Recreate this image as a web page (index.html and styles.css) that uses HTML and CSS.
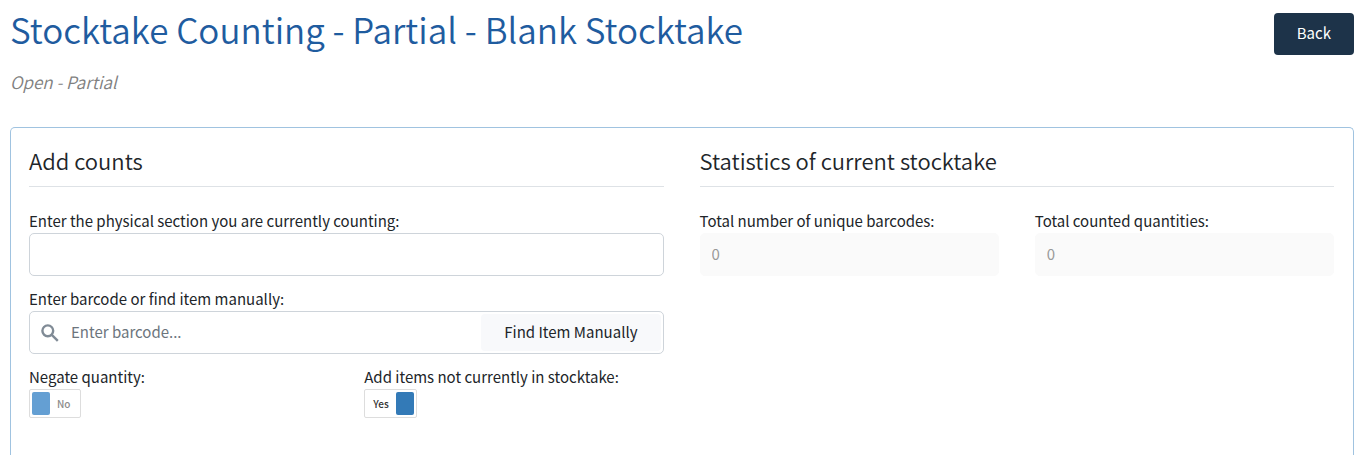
FILE: index.html
```html
<!DOCTYPE html>
<html lang="en">
<head>
    <meta charset="UTF-8">
    <meta name="viewport" content="width=device-width, initial-scale=1.0">
    <title>Stocktake Counting</title>
    <link rel="stylesheet" href="styles.css">
</head>
<body>
    <header class="page-header">
        <div>
            <h1>Stocktake Counting - Partial - Blank Stocktake</h1>
            <p class="status">Open - Partial</p>
        </div>
        <button type="button" class="btn-back">Back</button>
    </header>

    <main class="card">
        <section>
            <h2>Add counts</h2>

            <div class="field">
                <label for="section">Enter the physical section you are currently counting:</label>
                <input type="text" id="section" class="text-input">
            </div>

            <div class="field">
                <label for="barcode">Enter barcode or find item manually:</label>
                <div class="search-box">
                    <svg class="search-icon" viewBox="0 0 18 18" aria-hidden="true">
                        <circle cx="6.8" cy="6.8" r="5.4"/>
                        <path d="M10.8 10.8L16.8 16.8"/>
                    </svg>
                    <input type="text" id="barcode" placeholder="Enter barcode...">
                    <button type="button" class="btn-find">Find Item Manually</button>
                </div>
            </div>

            <div class="columns">
                <div class="field">
                    <label for="negate">Negate quantity:</label>
                    <div class="toggle">
                        <input type="checkbox" id="negate">
                        <span>No</span>
                    </div>
                </div>
                <div class="field">
                    <label for="addItems">Add items not currently in stocktake:</label>
                    <div class="toggle toggle-on">
                        <input type="checkbox" id="addItems" checked>
                        <span>Yes</span>
                    </div>
                </div>
            </div>
        </section>

        <section>
            <h2>Statistics of current stocktake</h2>

            <div class="columns">
                <div class="field">
                    <label for="uniqueBarcodes">Total number of unique barcodes:</label>
                    <input type="text" id="uniqueBarcodes" class="text-input" value="0" disabled>
                </div>
                <div class="field">
                    <label for="totalCounted">Total counted quantities:</label>
                    <input type="text" id="totalCounted" class="text-input" value="0" disabled>
                </div>
            </div>
        </section>
    </main>

    <script>
        // Keep the Yes/No text in step with the toggle
        document.querySelectorAll('.toggle input').forEach(input => {
            input.addEventListener('change', () => {
                input.parentElement.classList.toggle('toggle-on', input.checked);
                input.nextElementSibling.textContent = input.checked ? 'Yes' : 'No';
            });
        });
    </script>
</body>
</html>
```

FILE: styles.css
```css
* {
    box-sizing: border-box;
}

body {
    display: flex;
    flex-direction: column;
    min-height: 100vh;
    margin: 0;
    padding: 10px 12px 0 10px;
    background-color: #fff;
    color: #212529;
    font-family: "Noto Sans CJK SC", "Noto Sans", sans-serif;
    font-size: 15px;
    line-height: 24px;
}

input,
button {
    font: inherit;
    color: inherit;
}

h1,
h2,
p {
    margin: 0;
    font-weight: 350;
}

h1 {
    color: #1f5c9f;
    font-size: 35px;
    line-height: 38px;
}

h2 {
    margin-bottom: 22px;
    padding-bottom: 11px;
    border-bottom: 1px solid #dee2e6;
    font-size: 22px;
    line-height: 30px;
}

.page-header {
    display: flex;
    justify-content: space-between;
    align-items: flex-start;
    min-height: 117px;
}

.status {
    margin-top: 22px;
    color: #808080;
    font-size: 17px;
    font-style: italic;
}

.btn-back {
    margin-top: 3px;
    padding: 8px 23px 10px;
    border: 0;
    border-radius: 4px;
    background-color: #1d3349;
    color: #fff;
}

.card {
    flex: 1;
    display: grid;
    grid-template-columns: 1fr 1fr;
    gap: 36px;
    padding: 17px 19px 17px 18px;
    border: 1px solid #a0c3e0;
    border-bottom: 0;
    border-radius: 5px 5px 0 0;
}

.columns {
    display: grid;
    grid-template-columns: 1fr 1fr;
    gap: 36px;
}

.field {
    margin-bottom: 11px;
}

.field label {
    display: block;
}

.text-input,
.search-box {
    width: 100%;
    height: 43px;
    border: 1px solid #ced4da;
    border-radius: 5px;
    background-color: #fff;
}

.text-input {
    display: block;
    padding: 0 11px 2px;
}

.text-input:disabled {
    border-color: #fafafa;
    background-color: #fafafa;
    color: #999;
}

.search-box {
    display: flex;
    align-items: center;
    padding: 2px;
}

.search-icon {
    flex: none;
    width: 18px;
    height: 18px;
    margin: 0 12px 0 9px;
    fill: none;
    stroke: #808b96;
    stroke-width: 2.4;
}

.search-box input {
    flex: 1;
    min-width: 0;
    padding: 0 0 2px;
    border: 0;
    outline: 0;
}

.search-box input::placeholder {
    color: #6c757d;
}

.btn-find {
    height: 37px;
    padding: 0 23px 2px;
    border: 0;
    border-radius: 4px;
    background-color: #f8f9fb;
}

.toggle {
    display: inline-flex;
    align-items: center;
    gap: 7px;
    height: 29px;
    padding: 0 9px 0 2px;
    border: 1px solid #ddd;
    border-radius: 2px;
    color: #8c8c8c;
    font-size: 10px;
    font-weight: 500;
    vertical-align: top;
}

.toggle input {
    appearance: none;
    width: 18px;
    height: 23px;
    margin: 0;
    border-radius: 2px;
    background-color: #649fd3;
}

.toggle-on {
    flex-direction: row-reverse;
    padding: 0 2px 0 8px;
    color: #333;
}

.toggle-on input {
    background-color: #337ab7;
}
```
